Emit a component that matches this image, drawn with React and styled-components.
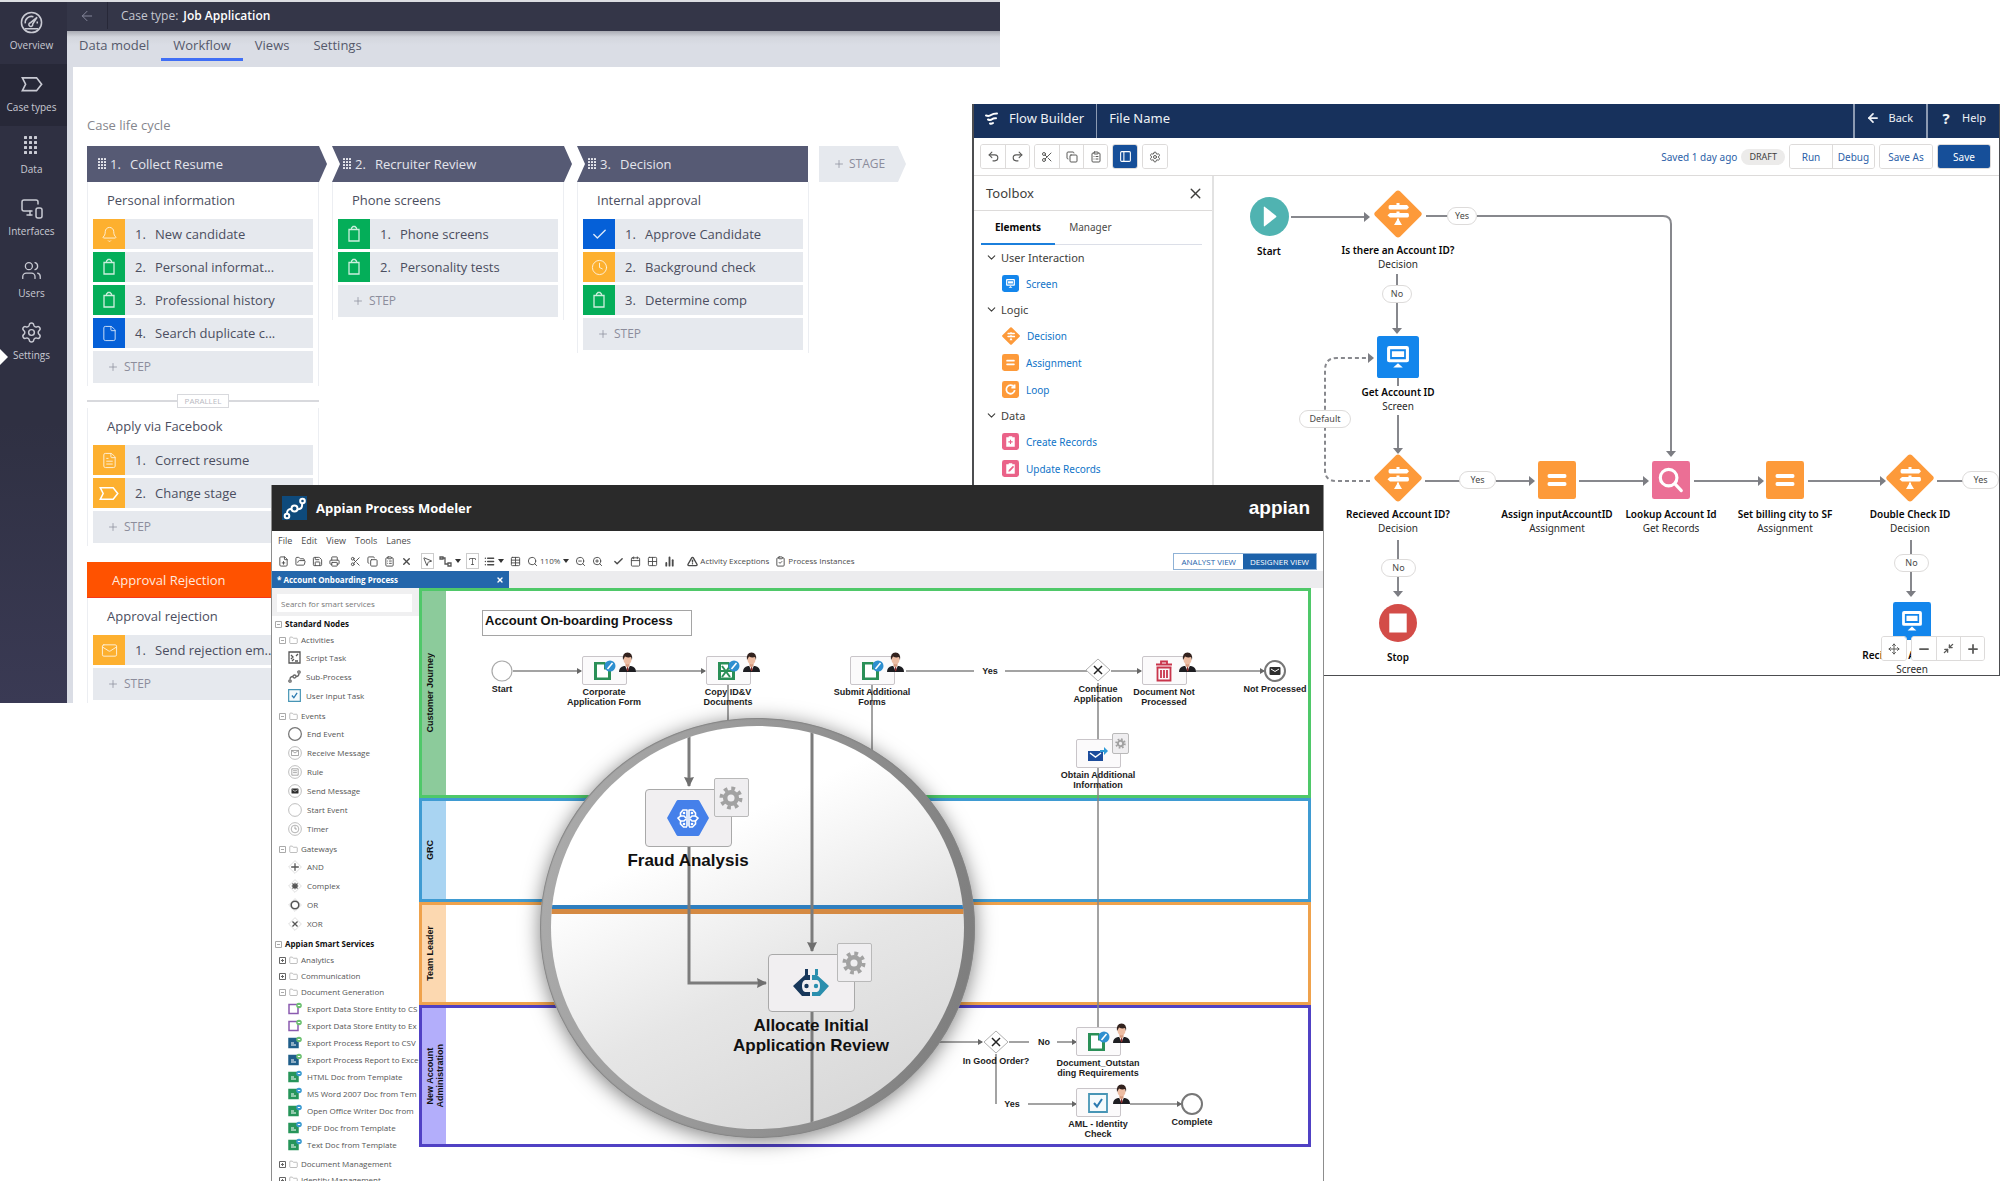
import React from 'react';
import styled, { createGlobalStyle, css } from 'styled-components';
import {
  ArrowLeft, Bell, Calendar, Check, ChevronDown, ClipboardCheck, ClipboardList, Clock, Copy, File, FileText,
  FolderOpen, Folder, Grid2x2, List, Mail, Minimize2, Minus, MonitorSmartphone, Move, MousePointer2,
  PanelLeft, Plus, Printer, Redo2, Save, Scissors, Search, Settings, Spline, Table, TriangleAlert,
  Undo2, Users, X, ZoomIn, ZoomOut, ChartNoAxesColumn, FilePlus, Type
} from 'lucide-react';

const GlobalStyle = createGlobalStyle`
  * { box-sizing: border-box; }
  body { margin: 0; background: #fff; }
  button, input { font: inherit; color: inherit; margin: 0; }
  button { padding: 0; border: 0; background: none; cursor: pointer; }
  ul, ol { list-style: none; margin: 0; padding: 0; }
  a { color: inherit; text-decoration: none; }
  h1, h2, h3, p { margin: 0; font: inherit; }
  svg { display: block; flex: none; }
`;

const Desktop = styled.main`
  position: relative;
  height: 100vh;
  overflow: hidden;
  background: #fff;
`;

/* ---------- Case designer ---------- */

const CaseWindow = styled.section`
  position: absolute;
  left: 0;
  top: 0;
  width: 50%;
  display: flex;
  border-top: 2px solid #dcdee2;
  background: #fff;
  color: #4b4e60;
  font: 13px/20px 'Open Sans', sans-serif;
`;

const SideNav = styled.nav`
  flex: none;
  width: 67px;
  padding-right: 4px;
  background: linear-gradient(#2f3042 60%, #3a3a54);
`;

const NavItem = styled.a`
  position: relative;
  display: flex;
  flex-direction: column;
  align-items: center;
  justify-content: space-between;
  height: 62px;
  margin-right: -4px;
  padding: 8px 4px 11px 0;
  background: ${p => (p.$active ? '#272838' : 'transparent')};
  color: #c9cad3;
  font-size: 10px;
  line-height: 16px;
`;

const NavIcon = styled.span`
  display: flex;
  align-items: center;
  height: 24px;
`;

const NavPointer = styled.span`
  position: absolute;
  left: 0;
  bottom: 9px;
  border: 8px solid transparent;
  border-left-color: #fff;
  border-right-width: 0;
`;

const CaseMain = styled.div`
  flex: 1;
  min-width: 0;
`;

const CaseHeader = styled.header`
  display: flex;
  align-items: center;
  height: 29px;
  padding-bottom: 2px;
  background: #343648;
  color: #c5c7d1;
  font-size: 12px;
`;

const BackButton = styled.button`
  display: flex;
  align-items: center;
  justify-content: center;
  width: 41px;
  height: 27px;
  margin-right: 13px;
  border-right: 1px solid #272838;
  color: #84869a;
`;

const CaseName = styled.b`
  margin-left: 5px;
  color: #fff;
  font-weight: 600;
`;

const CaseTabs = styled.div`
  display: flex;
  height: 36px;
  background: linear-gradient(#a9abb3, #d3d6dd 6px, #dadde5 14px);
`;

const CaseTab = styled.button`
  height: 30px;
  padding: 0 12px;
  border-bottom: 3px solid ${p => (p.$active ? '#3f6ef5' : 'transparent')};
  color: #55596b;
`;

const CaseBody = styled.div`
  padding: 48px 0 0 14px;
  border-left: 6px solid #dadde5;
`;

const LifeCycleTitle = styled.h2`
  margin-bottom: 11px;
  color: #85868d;
`;

const Stages = styled.div`
  display: grid;
  grid-template-columns: 240px 240px 231px auto;
  gap: 5px;
  justify-content: start;
  align-items: start;
`;

const shapes = {
  first: 'polygon(0 0, calc(100% - 8px) 0, 100% 50%, calc(100% - 8px) 100%, 0 100%)',
  middle: 'polygon(0 0, calc(100% - 8px) 0, 100% 50%, calc(100% - 8px) 100%, 0 100%, 8px 50%)',
  last: 'polygon(0 0, 100% 0, 100% 100%, 0 100%, 8px 50%)'
};

const StageHead = styled.h3`
  display: flex;
  align-items: center;
  gap: 3px;
  height: 36px;
  padding-left: 11px;
  background: #565a74;
  color: #e4e5ec;
  clip-path: ${p => shapes[p.$shape]};
`;

const StageNumber = styled.span`
  width: 17px;
`;

const AddStage = styled.button`
  display: flex;
  align-items: center;
  gap: 4px;
  width: 87px;
  height: 36px;
  margin-left: 6px;
  padding-left: 14px;
  background: #e6e9ee;
  color: #8c8d9c;
  font-size: 12px;
  clip-path: ${shapes.first};
`;

const Process = styled.div`
  width: 232px;
  padding: 0 5px 3px;
  border: solid #eceef2;
  border-width: 0 1px;
`;

const ProcessTitle = styled.p`
  padding: 8px 14px 9px;
`;

const Steps = styled.ol`
  display: grid;
  gap: 3px;
`;

const Step = styled.li`
  display: flex;
  align-items: center;
  height: ${p => (p.$add ? 32 : 30)}px;
  background: #e6e9ee;
`;

const StepTile = styled.span`
  display: flex;
  align-items: center;
  justify-content: center;
  width: 32px;
  height: 30px;
  margin-right: 10px;
  background: ${p => p.$color};
  color: #fff;
`;

const StepNumber = styled.span`
  width: 20px;
`;

const AddStep = styled.button`
  display: flex;
  align-items: center;
  gap: 5px;
  height: 32px;
  padding-left: 14px;
  color: #8c8d9c;
  font-size: 12px;
`;

const Parallel = styled.div`
  display: flex;
  align-items: center;
  width: 232px;
  margin-top: 8px;
  color: #b9bac2;
  font-size: 8px;
  line-height: 12px;

  &::before, &::after {
    content: '';
    flex: 1;
    height: 2px;
    background: #d8d9dd;
  }
`;

const ParallelLabel = styled.span`
  padding: 0 7px;
  border: 1px solid #d8d9dd;
`;

const Rejection = styled.h3`
  display: flex;
  align-items: center;
  height: 36px;
  margin-top: 16px;
  padding-left: 25px;
  border-bottom: 1px solid #f5371c;
  background: #ff5200;
  color: #ffe9df;
`;

const ORANGE = '#fdb02f';
const GREEN = '#04ae59';
const BLUE = '#0560d8';

const Gauge = () => (
  <svg width="23" height="23" viewBox="0 0 24 24" fill="none" stroke="currentColor" strokeWidth="1.6">
    <circle cx="12" cy="12" r="10.5" />
    <path d="M5.500 13a6.500 6.500 0 0 1 8.500-7M5 18.500h14M17.800 6.500l-4.600 7.200a2 2 0 1 1-2.200-1.500zM18 11v2" />
  </svg>
);

const CaseShape = ({ width = 22 }) => (
  <svg width={width} height={width * 3 / 4} viewBox="0 0 24 18" fill="none" stroke="currentColor" strokeWidth="1.800">
    <path d="M1.500 2H17l5.500 7-5.500 7H1.500L5 9z" />
  </svg>
);

const Dots = ({ cols, rows, size, gap }) => (
  <svg width={cols * gap} height={rows * gap} fill="currentColor">
    {Array.from({ length: cols * rows }, (_, i) => (
      <rect key={i} x={(i % cols) * gap} y={Math.floor(i / cols) * gap} width={size} height={size} rx=".5" />
    ))}
  </svg>
);

const Bag = () => (
  <svg width="14" height="18" viewBox="0 0 14 18" fill="none" stroke="currentColor" strokeWidth="1.300" opacity=".8">
    <path d="M2 4.500h10v11.500H2zM4.500 4.500V3l1.500-1.500h2L9.500 3v1.500" />
  </svg>
);

const glyph = { size: 17, strokeWidth: 1.3, opacity: 0.85 };

const stepKinds = {
  bell: [ORANGE, <Bell {...glyph} />],
  bag: [GREEN, <Bag />],
  file: [BLUE, <File {...glyph} />],
  check: [BLUE, <Check {...glyph} strokeWidth={2} />],
  clock: [ORANGE, <Clock {...glyph} />],
  text: [ORANGE, <FileText {...glyph} />],
  stage: [ORANGE, <CaseShape width={20} />],
  mail: [ORANGE, <Mail {...glyph} />]
};

const StepGroup = ({ title, steps }) => (
  <Process>
    <ProcessTitle>{title}</ProcessTitle>
    <Steps>
      {steps.map(([kind, name], i) => (
        <Step key={name}>
          <StepTile $color={stepKinds[kind][0]}>{stepKinds[kind][1]}</StepTile>
          <StepNumber>{i + 1}.</StepNumber>
          {name}
        </Step>
      ))}
      <Step $add><AddStep><Plus size={12} strokeWidth={1.5} />STEP</AddStep></Step>
    </Steps>
  </Process>
);

const Stage = ({ number, name, shape, children }) => (
  <div>
    <StageHead $shape={shape}>
      <Dots cols={3} rows={4} size={2} gap={3} />
      <StageNumber>{number}.</StageNumber>
      {name}
    </StageHead>
    {children}
  </div>
);

const navItems = [
  ['Overview', <Gauge />],
  ['Case types', <CaseShape />],
  ['Data', <Dots cols={3} rows={4} size={3} gap={5} />],
  ['Interfaces', <MonitorSmartphone size={24} strokeWidth={1.5} />],
  ['Users', <Users size={21} strokeWidth={1.5} />],
  ['Settings', <Settings size={23} strokeWidth={1.5} />]
];

const CaseDesigner = () => (
  <CaseWindow>
    <SideNav>
      {navItems.map(([name, icon]) => (
        <NavItem key={name} href="#" $active={name === 'Case types'}>
          <NavIcon>{icon}</NavIcon>
          {name}
          {name === 'Settings' && <NavPointer />}
        </NavItem>
      ))}
    </SideNav>
    <CaseMain>
      <CaseHeader>
        <BackButton aria-label="Back"><ArrowLeft size={16} strokeWidth={1.5} /></BackButton>
        Case type: <CaseName>Job Application</CaseName>
      </CaseHeader>
      <CaseTabs>
        {['Data model', 'Workflow', 'Views', 'Settings'].map(tab => (
          <CaseTab key={tab} $active={tab === 'Workflow'}>{tab}</CaseTab>
        ))}
      </CaseTabs>
      <CaseBody>
        <LifeCycleTitle>Case life cycle</LifeCycleTitle>
        <Stages>
          <Stage number={1} name="Collect Resume" shape="first">
            <StepGroup
              title="Personal information"
              steps={[['bell', 'New candidate'], ['bag', 'Personal informat...'], ['bag', 'Professional history'], ['file', 'Search duplicate c...']]}
            />
            <Parallel><ParallelLabel>PARALLEL</ParallelLabel></Parallel>
            <StepGroup title="Apply via Facebook" steps={[['text', 'Correct resume'], ['stage', 'Change stage']]} />
            <Rejection>Approval Rejection</Rejection>
            <StepGroup title="Approval rejection" steps={[['mail', 'Send rejection em...']]} />
          </Stage>
          <Stage number={2} name="Recruiter Review" shape="middle">
            <StepGroup title="Phone screens" steps={[['bag', 'Phone screens'], ['bag', 'Personality tests']]} />
          </Stage>
          <Stage number={3} name="Decision" shape="last">
            <StepGroup
              title="Internal approval"
              steps={[['check', 'Approve Candidate'], ['clock', 'Background check'], ['bag', 'Determine comp']]}
            />
          </Stage>
          <AddStage><Plus size={12} strokeWidth={1.5} />STAGE</AddStage>
        </Stages>
      </CaseBody>
    </CaseMain>
  </CaseWindow>
);

/* ---------- Flow builder ---------- */

const FlowWindow = styled.section`
  position: absolute;
  left: 48.6%;
  right: 0;
  top: 104px;
  display: flex;
  flex-direction: column;
  border: solid #4c4d50;
  border-width: 0 1px 1px 2px;
  background: #fff;
  color: #3e3e3c;
  font: 11px/14px 'Noto Sans', sans-serif;
`;

const FlowHeader = styled.header`
  display: flex;
  align-items: stretch;
  height: 34px;
  background: #17315c;
  color: #eef1f6;
  font-size: 13px;
`;

const FlowBrand = styled.h1`
  display: flex;
  align-items: center;
  gap: 11px;
  padding: 0 12px 6px 11px;
  border-right: 1px solid #8c9ab2;
`;

const FileName = styled.span`
  flex: 1;
  padding: 7px 12px;
`;

const HeaderLink = styled.a`
  display: flex;
  align-items: center;
  gap: 9px;
  padding: 0 13px 6px 11px;
  border-left: 2px solid #8c9ab2;
  font-size: 11px;
`;

const HelpMark = styled.b`
  width: 14px;
  font-size: 15px;
  text-align: center;
`;

const FlowToolbar = styled.div`
  display: flex;
  align-items: center;
  gap: 4px;
  height: 38px;
  padding: 0 8px 0 6px;
  border-bottom: 1px solid #dddbda;
  color: #2c5fa8;
`;

const ButtonGroup = styled.div`
  display: flex;
  border: 1px solid #dddbda;
  border-radius: 3px;
  background: #fff;
  overflow: hidden;
`;

const FlowButton = styled.button`
  display: flex;
  align-items: center;
  justify-content: center;
  width: ${p => p.$width || 24}px;
  height: 23px;
  background: ${p => (p.$filled ? '#164f99' : '#fff')};
  color: ${p => (p.$filled ? '#fff' : p.$width ? '#2c5fa8' : '#5a5a58')};
  font-size: 10px;

  & + & { border-left: 1px solid #dddbda; }
`;

const Saved = styled.span`
  margin-left: auto;
  font-size: 10px;
`;

const Draft = styled.span`
  padding: 1px 8px;
  border-radius: 8px;
  background: #ecebea;
  color: #3e3e3c;
  font-size: 9px;
`;

const FlowBody = styled.div`
  display: flex;
  height: 499px;
`;

const Toolbox = styled.aside`
  flex: none;
  width: 240px;
  border-right: 2px solid #e2e2e2;
`;

const ToolboxHead = styled.div`
  display: flex;
  align-items: center;
  justify-content: space-between;
  height: 35px;
  padding: 0 8px 0 12px;
  border-bottom: 1px solid #dddbda;
  font-size: 13px;
`;

const ToolTabs = styled.div`
  display: flex;
  height: 34px;
  margin: 0 10px 0 7px;
  border-bottom: 1px solid #dcdfe8;
`;

const ToolTab = styled.button`
  height: 34px;
  padding: 0 14px;
  border-bottom: 2px solid ${p => (p.$active ? '#1b7fdc' : 'transparent')};
  color: ${p => (p.$active ? '#080707' : '#4a4a48')};
  font-size: 10px;
  font-weight: ${p => (p.$active ? 700 : 400)};
`;

const ToolSection = styled.h3`
  display: flex;
  align-items: center;
  gap: 3px;
  height: 25px;
  padding-left: 11px;
`;

const ToolItem = styled.li`
  display: flex;
  align-items: center;
  gap: 7px;
  height: 27px;
  padding-left: 28px;
  color: #0f74c8;
  font-size: 10px;
`;

const FlowCanvas = styled.div`
  position: relative;
  flex: 1;
  overflow: hidden;
`;

const Wires = styled.svg`
  position: absolute;
  left: 0;
  top: 0;
  width: 100%;
  height: 100%;
  pointer-events: none;
`;

const FlowNode = styled.div`
  position: absolute;
  left: ${p => p.$x}px;
  top: ${p => p.$y}px;
  display: grid;
  justify-items: center;
  align-content: end;
  width: 140px;
  margin-left: -70px;
  color: #2b2b2b;
  font-size: 10px;
  line-height: 14px;
`;

const NodeIcon = styled.div`
  display: flex;
  align-items: center;
  justify-content: center;
  height: 48px;
  margin-bottom: ${p => p.$gap || 4}px;
`;

const NodeName = styled.b`
  font-weight: 600;
  color: #080707;
  white-space: nowrap;
`;

const Pill = styled.span`
  position: absolute;
  left: ${p => p.$x}px;
  top: ${p => p.$y}px;
  width: ${p => p.$w}px;
  height: 18px;
  border: 1px solid #dddbda;
  border-radius: 9px;
  background: #fff;
  color: #4a4a48;
  font-size: 9px;
  line-height: 16px;
  text-align: center;
`;

const ZoomBar = styled.div`
  position: absolute;
  right: 14px;
  bottom: 14px;
  display: flex;
  gap: 4px;
`;

const flowColors = {
  decision: '#fd9a3a', assign: '#fd9a3a', loop: '#fd9a3a', screen: '#1386ec', lookup: '#eb6f95',
  start: '#50b3b1', stop: '#d34c48', record: '#ea6288', update: '#ea6288'
};

const flowShapes = {
  decision: <path d="M24 .5q1.200 0 2 .8L47 22.300q1.500 1.700 0 3.400L26 46.700q-2 1.500-4 0L1 25.700q-1.500-1.700 0-3.400L22 1.300q.8-.8 2-.8z" />,
  start: <circle cx="24" cy="24" r="24" />,
  stop: <circle cx="24" cy="24" r="24" />
};

const flowGlyphs = {
  decision: (
    <path d="M22.500 13h3v2h7.500l2 2.300-2 2.300H16q-1.500 0-1.500-2.300T16 15h6.500zM22.500 21.500h3v1.500h8q1.500 0 1.500 2.300t-1.500 2.300H16l-2.500-2.300L16 23h6.500zM23 28.500h2v1.500l3 5h-8l3-5z" />
  ),
  assign: <path d="M14 16.500h20q2 0 2 2.500t-2 2.500H14q-2 0-2-2.500t2-2.500zM14 26.500h20q2 0 2 2.500t-2 2.500H14q-2 0-2-2.500t2-2.500z" />,
  screen: (
    <path fillRule="evenodd" d="M14 11.500h20q2.500 0 2.500 2.500v14q0 2-2.500 2H14q-2.500 0-2.500-2V14q0-2.500 2.500-2.500zM15 15v11.500h18V15zM17 17.500h14V24H17zM24 31l5.500 5h-11z" />
  ),
  lookup: (
    <g fill="none" stroke="#fff" strokeWidth="4" strokeLinecap="round"><circle cx="21" cy="21" r="10.500" /><path d="M29 29l8 8.500" /></g>
  ),
  start: <path d="M17 12.500q0-1 1-.5l14 11q1 1 0 2l-14 11q-1 .5-1-.5z" />,
  stop: <rect x="13" y="12" width="22" height="24" />,
  loop: <g fill="none" stroke="#fff" strokeWidth="5"><path d="M34 17a12 12 0 1 0 2 9" /><path d="M35.500 10v9h-9" /></g>,
  record: <path fillRule="evenodd" d="M12 12h7V9h10v3h7v27H12zM22.500 19v4.500H18v3h4.500V31h3v-4.500H30v-3h-4.500V19z" />,
  update: <path fillRule="evenodd" d="M12 12h7V9h10v3h7v27H12zM31 16L19 28l-1 5 5-1 11-12z" />
};

const FlowIcon = ({ kind, size }) => (
  <svg width={size} height={size} viewBox="0 0 48 48">
    <g fill={flowColors[kind]}>{flowShapes[kind] || <rect width="48" height="48" rx={size > 20 ? 3 : 7} />}</g>
    <g fill="#fff">{flowGlyphs[kind]}</g>
  </svg>
);

const FlowLogo = () => (
  <svg width="13" height="13" viewBox="0 0 13 13" fill="none" stroke="#fff" strokeWidth="2" strokeLinecap="round">
    <path d="M1 3.500q3 1 5-.5t6-1.500M3 7.500q2.500 1 4-.3t4-1M5 11.500q1.500.5 3-.5" />
  </svg>
);

const tools = [
  ['User Interaction', [['screen', 'Screen']]],
  ['Logic', [['decision', 'Decision'], ['assign', 'Assignment'], ['loop', 'Loop']]],
  ['Data', [['record', 'Create Records'], ['update', 'Update Records']]]
];

const flowNodes = [
  { kind: 'start', x: 55, y: 16, size: 39, name: 'Start' },
  { kind: 'decision', x: 184, y: 14, size: 48, name: 'Is there an Account ID?', type: 'Decision', gap: 5 },
  { kind: 'screen', x: 184, y: 157, size: 42, name: 'Get Account ID', type: 'Screen' },
  { kind: 'decision', x: 184, y: 278, size: 48, name: 'Recieved Account ID?', type: 'Decision', gap: 5 },
  { kind: 'assign', x: 343, y: 280, size: 38, name: 'Assign inputAccountID', type: 'Assignment', gap: 3 },
  { kind: 'lookup', x: 457, y: 280, size: 38, name: 'Lookup Account Id', type: 'Get Records', gap: 3 },
  { kind: 'assign', x: 571, y: 280, size: 38, name: 'Set billing city to SF', type: 'Assignment', gap: 3 },
  { kind: 'decision', x: 696, y: 278, size: 48, name: 'Double Check ID', type: 'Decision', gap: 5 },
  { kind: 'stop', x: 184, y: 423, size: 38, name: 'Stop', gap: 3 },
  { kind: 'screen', x: 698, y: 421, size: 38, name: 'Recieved Account ID', type: 'Screen', gap: 3 }
];

const pills = [
  ['Yes', 233, 31, 30], ['No', 168, 109, 30], ['Default', 85, 234, 52], ['Yes', 245, 295, 37],
  ['Yes', 748, 295, 37], ['No', 167, 383, 35], ['No', 680, 378, 35]
];

const flowWires = [
  'M77 41h74', 'M263 40h186q8 0 8 8v228', 'M183 127v26', 'M184 239v34', 'M282 305h34', 'M365 305h65',
  'M480 305h65', 'M594 305h73', 'M184 400v16', 'M697 396v20'
];

const FlowBuilder = () => (
  <FlowWindow>
    <FlowHeader>
      <FlowBrand><FlowLogo />Flow Builder</FlowBrand>
      <FileName>File Name</FileName>
      <HeaderLink href="#"><ArrowLeft size={14} strokeWidth={3} />Back</HeaderLink>
      <HeaderLink href="#"><HelpMark>?</HelpMark>Help</HeaderLink>
    </FlowHeader>
    <FlowToolbar>
      <ButtonGroup>
        <FlowButton aria-label="Undo"><Undo2 size={13} /></FlowButton>
        <FlowButton aria-label="Redo"><Redo2 size={13} /></FlowButton>
      </ButtonGroup>
      <ButtonGroup>
        <FlowButton aria-label="Cut"><Scissors size={12} /></FlowButton>
        <FlowButton aria-label="Copy"><Copy size={12} /></FlowButton>
        <FlowButton aria-label="Paste"><ClipboardList size={12} /></FlowButton>
      </ButtonGroup>
      <ButtonGroup><FlowButton $filled aria-label="Toggle toolbox"><PanelLeft size={13} /></FlowButton></ButtonGroup>
      <ButtonGroup><FlowButton aria-label="Settings"><Settings size={12} /></FlowButton></ButtonGroup>
      <Saved>Saved 1 day ago</Saved>
      <Draft>DRAFT</Draft>
      <ButtonGroup><FlowButton $width={42}>Run</FlowButton><FlowButton $width={42}>Debug</FlowButton></ButtonGroup>
      <ButtonGroup><FlowButton $width={52}>Save As</FlowButton></ButtonGroup>
      <ButtonGroup><FlowButton $width={52} $filled>Save</FlowButton></ButtonGroup>
    </FlowToolbar>
    <FlowBody>
      <Toolbox>
        <ToolboxHead>Toolbox<button aria-label="Close"><X size={17} /></button></ToolboxHead>
        <ToolTabs>
          <ToolTab $active>Elements</ToolTab>
          <ToolTab>Manager</ToolTab>
        </ToolTabs>
        {tools.map(([section, items]) => (
          <div key={section}>
            <ToolSection><ChevronDown size={13} />{section}</ToolSection>
            <ul>
              {items.map(([kind, name]) => (
                <ToolItem key={name}><FlowIcon kind={kind} size={kind === 'decision' ? 18 : 17} />{name}</ToolItem>
              ))}
            </ul>
          </div>
        ))}
      </Toolbox>
      <FlowCanvas>
        <Wires fill="none" stroke="#87888d" strokeWidth="2">
          <defs>
            <marker id="flow-arrow" markerUnits="userSpaceOnUse" markerWidth="7" markerHeight="10" refX="1" refY="5" orient="auto">
              <path d="M0 0l6 5-6 5z" fill="#7c7d83" stroke="none" />
            </marker>
          </defs>
          <path d="M183 98v14M184 202v8M184 364v20M697 364v14M212 40h25M211 305h35M723 305h26" />
          {flowWires.map(d => <path key={d} d={d} markerEnd="url(#flow-arrow)" />)}
          <path d="M156 305h-34q-11 0-11-11V194q0-12 12-12h32" strokeDasharray="4 3" markerEnd="url(#flow-arrow)" />
        </Wires>
        {flowNodes.map((n, i) => (
          <FlowNode key={i} $x={n.x} $y={n.y}>
            <NodeIcon $gap={n.gap}><FlowIcon kind={n.kind} size={n.size} /></NodeIcon>
            <NodeName>{n.name}</NodeName>
            {n.type}
          </FlowNode>
        ))}
        {pills.map(([text, x, y, w], i) => <Pill key={i} $x={x} $y={y} $w={w}>{text}</Pill>)}
        <ZoomBar>
          <ButtonGroup><FlowButton aria-label="Pan"><Move size={12} /></FlowButton></ButtonGroup>
          <ButtonGroup>
            <FlowButton aria-label="Zoom out"><Minus size={14} strokeWidth={3} /></FlowButton>
            <FlowButton aria-label="Fit"><Minimize2 size={11} strokeWidth={3} /></FlowButton>
            <FlowButton aria-label="Zoom in"><Plus size={14} strokeWidth={3} /></FlowButton>
          </ButtonGroup>
        </ZoomBar>
      </FlowCanvas>
    </FlowBody>
  </FlowWindow>
);

/* ---------- Process modeler ---------- */

const ModelerWindow = styled.section`
  position: absolute;
  left: 13.55%;
  top: 485px;
  bottom: 0;
  width: 52.65%;
  display: flex;
  flex-direction: column;
  border: solid #8d8d8d;
  border-width: 0 1px;
  background: #fff;
  color: #4a4a4a;
  font: 8px/12px 'Open Sans', sans-serif;
  overflow: hidden;
`;

const ModelerHeader = styled.header`
  flex: none;
  display: flex;
  align-items: center;
  gap: 9px;
  height: 46px;
  padding: 0 13px 0 10px;
  background: #2a2a2a;
  color: #fff;
`;

const ModelerTitle = styled.h1`
  flex: 1;
  font-size: 13px;
  font-weight: 700;
`;

const Wordmark = styled.span`
  font: bold 19px/28px 'Liberation Sans', sans-serif;
`;

const MenuBar = styled.nav`
  flex: none;
  display: flex;
  gap: 9px;
  padding: 4px 6px;
  font-size: 9px;
`;

const ModelerTools = styled.div`
  flex: none;
  display: flex;
  align-items: center;
  gap: 6px;
  height: 20px;
  padding: 0 6px;
`;

const ToolButton = styled.button`
  display: flex;
  align-items: center;
  justify-content: center;
  gap: 2px;
  min-width: 11px;
  height: 14px;
  outline: ${p => (p.$boxed ? '1px solid #ccc' : 'none')};
`;

const ToolGap = styled.span`
  width: ${p => p.$width || 0}px;
  margin-left: -2px;
`;

const Caret = styled.span`
  margin-left: 1px;
  border: 3px solid transparent;
  border-top: 4px solid #333;
  border-bottom: 0;
`;

const ViewSwitch = styled.div`
  display: flex;
  margin-left: auto;
  border: 1px solid #8fb2d6;
`;

const ViewButton = styled.button`
  height: 15px;
  padding: 0 7px;
  background: ${p => (p.$active ? '#1d62aa' : '#fff')};
  color: ${p => (p.$active ? '#fff' : '#1d62aa')};
  line-height: 15px;
`;

const DocTabs = styled.div`
  flex: none;
  height: 17px;
  background: #ececee;
`;

const DocTab = styled.div`
  display: flex;
  align-items: center;
  justify-content: space-between;
  width: 237px;
  height: 17px;
  padding: 0 5px;
  background: #2366ab;
  color: #fff;
  font-weight: 700;
`;

const ModelerBody = styled.div`
  flex: 1;
  display: flex;
  align-items: flex-start;
  min-height: 0;
`;

const Palette = styled.aside`
  flex: none;
  width: 147px;
`;

const SearchBox = styled.div`
  height: 28px;
  padding: 6px 7px 4px 5px;
  background: #f0f0f1;
`;

const SearchInput = styled.input`
  display: block;
  width: 100%;
  height: 18px;
  padding: 0 4px;
  border: 0;
  background: #fff;
  color: #4a4a4a;

  &::placeholder { color: #777; }
`;

const TreeRow = styled.div`
  display: flex;
  align-items: center;
  gap: ${p => (p.$leaf ? 5 : 3)}px;
  height: ${p => p.$height || 16}px;
  padding-left: ${p => (p.$root ? 3 : p.$leaf ? 16 : 7)}px;
  font-weight: ${p => (p.$root ? 700 : 400)};
  color: ${p => (p.$root ? '#111' : '#555')};
  white-space: nowrap;
`;

const TreeGroup = styled.div`
  padding-bottom: ${p => (p.$open ? 3 : 0)}px;
`;

const Diagram = styled.div`
  position: relative;
  flex: 1;
  margin-right: 12px;
`;

const Lane = styled.div`
  display: flex;
  height: ${p => p.$height}px;
  border: 3px solid ${p => p.$line};
`;

const LaneLabel = styled.div`
  display: flex;
  align-items: center;
  width: 24px;
  padding-left: 3px;
  background: ${p => p.$fill};
  color: #111;
  font: bold 9px/10px 'Liberation Sans', sans-serif;
  text-align: center;
  white-space: pre-line;

  span {
    writing-mode: vertical-rl;
    transform: rotate(180deg);
  }
`;

const bpmText = css`
  color: #1c1c1c;
  font: bold 9px/10px 'Liberation Sans', sans-serif;
  text-align: center;
  white-space: pre-line;
`;

const ProcessName = styled.h2`
  position: absolute;
  left: 63px;
  top: 22px;
  width: 210px;
  height: 26px;
  padding-left: 2px;
  border: 1px solid #a5a5a5;
  color: #111;
  font: bold 13px/20px 'Liberation Sans', sans-serif;
`;

const BpmNode = styled.div`
  position: absolute;
  left: ${p => p.$x}px;
  top: ${p => p.$y}px;
  display: grid;
  justify-items: center;
  gap: 2px;
  width: 100px;
  margin-left: -50px;
  ${bpmText}
`;

const TaskBox = styled.div`
  position: relative;
  display: flex;
  align-items: center;
  justify-content: center;
  width: 45px;
  height: 29px;
  border: 1px solid #c9c5c9;
  border-radius: 2px;
  background: #fbfafb;
`;

const Corner = styled.span`
  position: absolute;
  left: ${p => (p.$gear ? 35 : 36)}px;
  top: ${p => (p.$gear ? -7 : -5)}px;
`;

const GearBox = styled.span`
  display: flex;
  align-items: center;
  justify-content: center;
  width: ${p => p.$size}px;
  height: ${p => p.$size + 4}px;
  border: 1px solid #b9b9b9;
  border-radius: 2px;
  background: #efeef0;
  color: #a2a2a2;
`;

const EdgeLabel = styled.span`
  position: absolute;
  left: ${p => p.$x}px;
  top: ${p => p.$y}px;
  width: 30px;
  margin-left: -15px;
  ${bpmText}
`;

const LensRing = styled.div`
  position: absolute;
  left: 121px;
  top: 130px;
  width: 435px;
  height: 420px;
  padding: 8px 11px 9px;
  border-radius: 50%;
  background: linear-gradient(100deg, #adadad, #939393 55%, #7b7b7b);
  box-shadow: 0 3px 20px rgba(0, 0, 0, 0.5), inset 0 0 1px 1px #858585;
`;

const Lens = styled.div`
  position: relative;
  width: 100%;
  height: 100%;
  border-radius: 50%;
  overflow: hidden;
  background: linear-gradient(155deg, #fff 30%, #e6e6e6 60%, #d3d3d3);
`;

const LensDivider = styled.div`
  position: absolute;
  left: 0;
  right: 0;
  top: 179px;
  height: 9px;
  border-top: 4px solid #2f7fbf;
  border-bottom: 5px solid #d58a43;
`;

const LensNode = styled.div`
  position: absolute;
  left: ${p => p.$x}px;
  top: ${p => p.$y}px;
  display: grid;
  justify-items: center;
  gap: 4px;
  width: 200px;
  margin-left: -101px;
  color: #111;
  font: bold 17px/20px 'Liberation Sans', sans-serif;
  text-align: center;
  white-space: pre-line;
`;

const LensBox = styled.div`
  position: relative;
  display: flex;
  align-items: center;
  justify-content: center;
  width: 87px;
  height: 58px;
  border: 1px solid #a9a9a9;
  border-radius: 4px;
  background: #f1eff1;
`;

const LensCorner = styled.span`
  position: absolute;
  left: 68px;
  top: -12px;
`;

const Gear = ({ size }) => (
  <svg width={size} height={size} viewBox="0 0 24 24" fill="none" stroke="currentColor">
    <circle cx="12" cy="12" r="9.500" strokeWidth="4" strokeDasharray="3.700 3.760" />
    <circle cx="12" cy="12" r="5.800" strokeWidth="4.500" />
  </svg>
);

const Person = () => (
  <svg width="17" height="20" viewBox="0 0 17 20">
    <path d="M0 20q0-5 5-6h7q5 1 5 6z" fill="#1d1d21" />
    <path d="M6 13.500h5L8.500 19z" fill="#fff" />
    <path d="M8.100 14.500h.9l.6 3.500-1 1.500-1-1.500z" fill="#8d2a2a" />
    <path d="M6.500 10h4v4l-2 1.500-2-1.500z" fill="#d69a7e" />
    <ellipse cx="8.500" cy="7.500" rx="4" ry="5" fill="#edbda3" />
    <path d="M4 8Q3 .5 8.500.5T13 8l-1-3q-3 1-6-.5z" fill="#33231f" />
  </svg>
);

const FormIcon = ({ excel }) => (
  <svg width="24" height="22" viewBox="0 0 24 22">
    <path d="M2 2h11l6 6v12H2z" fill="#2a8f57" />
    <path d="M5 4.500h7v5h4v8H5z" fill="#fff" />
    {excel && <path d="M6 6l8 11M14 6L6 17M4 11h12" stroke="#2a8f57" strokeWidth="2" />}
    <circle cx="18" cy="6" r="5.500" fill="#2e8fd0" />
    <path d="M15.500 9l5-6" stroke="#fff" strokeWidth="1.600" />
  </svg>
);

const MessageIcon = () => (
  <svg width="20" height="18" viewBox="0 0 20 18">
    <path d="M0 6h15v10H0z" fill="#1c4c9c" />
    <path d="M2 8l5.500 4L13 8" fill="none" stroke="#fff" strokeWidth="1.500" />
    <path d="M12 5h4V2l4 4-4 4V7h-4z" fill="#2e9ad8" />
  </svg>
);

const CheckTask = ({ size = 20 }) => (
  <svg width={size} height={size} viewBox="0 0 20 20" fill="none" stroke="#4795b5">
    <path d="M1 1h18v18H1z" strokeWidth="1.800" fill="#f4fafc" />
    <path d="M6 10l3 3.500L14 6" strokeWidth="2" stroke="#2a7ab0" />
  </svg>
);

const TrashIcon = () => (
  <svg width="18" height="22" viewBox="0 0 18 22" fill="none" stroke="#c9354c" strokeWidth="1.800">
    <path d="M1 4.500h16M6 4V1.500h6V4M2.500 8v12.500h13V8M1.500 7.500h15M6 10v8M9 10v8M12 10v8" />
  </svg>
);

const GatewayIcon = () => (
  <svg width="26" height="24" viewBox="0 0 26 24" fill="#fff">
    <path d="M13 1l12 11-12 11L1 12z" stroke="#b0b0b0" />
    <path d="M9 8l8 8M17 8l-8 8" stroke="#222" strokeWidth="1.500" />
  </svg>
);

const EventIcon = ({ size = 22, message, strong, children }) => (
  <svg width={size} height={size} viewBox="0 0 22 22" fill="#fff">
    <circle cx="11" cy="11" r="10" stroke={strong ? '#777' : '#aaa'} strokeWidth={strong ? 2 : 1.2} />
    {message && <rect x="5.500" y="7" width="11" height="8" rx="1" fill="#2e2e2e" />}
    {message && <path d="M7 9l4 2.500L15 9" fill="none" stroke="#fff" />}
    {children}
  </svg>
);

const BrainHex = () => (
  <svg width="42" height="36" viewBox="0 0 42 36">
    <path d="M11 0h20q1 0 1.500 1L42 18l-9.500 17q-.5 1-1.500 1H11q-1 0-1.500-1L0 18 9.500 1Q10 0 11 0z" fill="#4580ea" />
    <g fill="none" stroke="#fff" strokeWidth="1.600">
      <path d="M20 9.500v17M22 9.500v17M20 10h-4l-2.500 3v3L11 18l2.500 3v3l3 3H20M22 10h4l2.500 3v3l2.500 2-2.500 3v3l-3 3H22" />
      <path d="M14 16h3l2 2M14 21h3l2-2M28 16h-3l-2 2M28 21h-3l-2-2" />
    </g>
    <g fill="#fff"><circle cx="17" cy="13" r="1.300" /><circle cx="25" cy="13" r="1.300" /><circle cx="17" cy="24" r="1.300" /><circle cx="25" cy="24" r="1.300" /></g>
  </svg>
);

const RobotIcon = () => (
  <svg width="36" height="28" viewBox="0 0 36 28">
    <path d="M17 6h-5L0 17l9 10h8v-4h-5q-3-1-3-6t3-6h5z" fill="#17375a" />
    <path d="M19 6h5l12 11-9 10h-8v-4h5q3-1 3-6t-3-6h-5z" fill="#2b8fae" />
    <path d="M12 0h3v6h-3z" fill="#17375a" /><path d="M22 0h3v6h-3z" fill="#2b8fae" />
    <circle cx="13.500" cy="17" r="2.200" fill="#17375a" /><circle cx="23" cy="17" r="2.200" fill="#2b8fae" />
  </svg>
);

const ModelerLogo = () => (
  <svg width="25" height="24" viewBox="0 0 25 24">
    <rect width="25" height="24" fill="#0e4a7c" />
    <g fill="none" stroke="#fff" strokeWidth="2">
      <path d="M5 17.500q0-5 5-4.500M15 13q6 1 5-6" />
      <circle cx="5" cy="20" r="2.300" /><circle cx="12.500" cy="12.500" r="3" /><circle cx="20.500" cy="5" r="2.300" />
    </g>
  </svg>
);

const SubProcessIcon = ({ size = 13 }) => (
  <svg width={size} height={size} viewBox="0 0 13 13" fill="none" stroke="#666" strokeWidth="1.300">
    <circle cx="2" cy="11" r="1.200" /><circle cx="6.500" cy="6.500" r="1.500" /><circle cx="11" cy="2" r="1.200" />
    <path d="M2 9.500q0-3 3-3M8 6.500q3 0 3-3" />
  </svg>
);

const ScriptIcon = () => (
  <svg width="13" height="13" viewBox="0 0 13 13" fill="none" stroke="#555" strokeWidth="1.300">
    <path d="M1 1h11v11H1zM3 4l2 2-2 2M10 3L8 5M7 10h3M4 10l2-2" />
  </svg>
);

const ConnectorIcon = () => (
  <svg width="13" height="11" viewBox="0 0 13 11" fill="none" stroke="#555" strokeWidth="1.300">
    <path d="M1 1h3v2H1zM4 2h2v6h3M9 7h3v3H9z" />
  </svg>
);

const Toggle = ({ open }) => (
  <svg width="7" height="7" viewBox="0 0 7 7" fill="none" stroke={open ? '#aaa' : '#666'}>
    <path d={open ? 'M.5.5h6v6h-6zM2 3.500h3' : 'M.5.5h6v6h-6zM2 3.500h3M3.500 2v3'} />
  </svg>
);

const ReportIcon = ({ fill, dot, hollow }) => (
  <svg width="14" height="13" viewBox="0 0 14 13">
    <path d="M1 2.500h9v9H1z" fill={hollow ? '#fff' : fill} stroke={fill} strokeWidth="1.500" />
    {!hollow && <path d="M3 9h5M3 7h3" stroke="#fff" />}
    <circle cx="11" cy="3.500" r="2.800" fill={dot} />
    <path d="M9.800 3.500h2.400" stroke="#fff" />
  </svg>
);

const Diamond = ({ children }) => (
  <svg width="14" height="14" viewBox="0 0 22 22" fill="none" stroke="#555" strokeWidth="2">
    <path d="M11 1l10 10-10 10L1 11z" stroke="#ccc" strokeWidth="1" />
    {children}
  </svg>
);

const purple = <ReportIcon fill="#8a5bb0" dot="#6cc070" hollow />;
const teal = <ReportIcon fill="#205f8a" dot="#6cc070" />;
const green = <ReportIcon fill="#27955a" dot="#3a9ad0" />;

const palette = [
  ['Standard Nodes', [
    ['Activities', 19, [
      ['Script Task', <ScriptIcon />],
      ['Sub-Process', <SubProcessIcon />],
      ['User Input Task', <CheckTask size={13} />]
    ]],
    ['Events', 19, [
      ['End Event', <EventIcon size={14} strong />],
      ['Receive Message', <EventIcon size={14}><path d="M5.500 7h11v8h-11zl5.500 4 5.500-4" fill="none" stroke="#777" /></EventIcon>],
      ['Rule', <EventIcon size={14}><path d="M6 6h10v10H6zM8 9h6M8 12h6" fill="none" stroke="#777" /></EventIcon>],
      ['Send Message', <EventIcon size={14} message />],
      ['Start Event', <EventIcon size={14} />],
      ['Timer', <EventIcon size={14}><circle cx="11" cy="11" r="6" stroke="#888" /><path d="M11 7v4h3" fill="none" stroke="#777" /></EventIcon>]
    ]],
    ['Gateways', 19, [
      ['AND', <Diamond><path d="M11 5v12M5 11h12" /></Diamond>],
      ['Complex', <Diamond><path d="M7 7l8 8M15 7l-8 8M11 6v10M6 11h10" /></Diamond>],
      ['OR', <Diamond><circle cx="11" cy="11" r="6" strokeWidth="2.500" /></Diamond>],
      ['XOR', <Diamond><path d="M7 7l8 8M15 7l-8 8" /></Diamond>]
    ]]
  ]],
  ['Appian Smart Services', [
    ['Analytics'],
    ['Communication'],
    ['Document Generation', 17, [
      ['Export Data Store Entity to CS', purple],
      ['Export Data Store Entity to Ex', purple],
      ['Export Process Report to CSV', teal],
      ['Export Process Report to Exce', teal],
      ['HTML Doc from Template', green],
      ['MS Word 2007 Doc from Tem', green],
      ['Open Office Writer Doc from', green],
      ['PDF Doc from Template', green],
      ['Text Doc from Template', green]
    ]],
    ['Document Management'],
    ['Identity Management']
  ]]
];

const lanes = [
  ['Customer Journey', 210, '#4fc869', '#8ccb9b'],
  ['GRC', 104, '#3f9bd2', '#a9d4f2'],
  ['Team Leader', 103, '#efa24c', '#fcd8b0'],
  ['New Account\nAdministration', 142, '#5041c4', '#b3aefb']
];

const bpmNodes = [
  { x: 83, y: 72, icon: <EventIcon />, text: 'Start' },
  { x: 185, y: 68, task: <FormIcon />, person: true, text: 'Corporate\nApplication Form' },
  { x: 309, y: 68, task: <FormIcon excel />, person: true, text: 'Copy ID&V\nDocuments' },
  { x: 453, y: 68, task: <FormIcon />, person: true, text: 'Submit Additional\nForms' },
  { x: 679, y: 70, icon: <GatewayIcon />, text: 'Continue\nApplication' },
  { x: 745, y: 68, task: <TrashIcon />, person: true, text: 'Document Not\nProcessed' },
  { x: 856, y: 72, icon: <EventIcon message strong />, text: 'Not Processed' },
  { x: 679, y: 151, task: <MessageIcon />, gear: true, text: 'Obtain Additional\nInformation' },
  { x: 577, y: 442, icon: <GatewayIcon />, text: 'In Good Order?' },
  { x: 679, y: 439, task: <FormIcon />, person: true, text: 'Document_Outstan\nding Requirements' },
  { x: 679, y: 500, task: <CheckTask />, person: true, text: 'AML - Identity\nCheck' },
  { x: 773, y: 505, icon: <EventIcon strong />, text: 'Complete' }
];

const toolIcon = { size: 11, strokeWidth: 2 };

const ProcessModeler = () => (
  <ModelerWindow>
    <ModelerHeader>
      <ModelerLogo />
      <ModelerTitle>Appian Process Modeler</ModelerTitle>
      <Wordmark>appian</Wordmark>
    </ModelerHeader>
    <MenuBar>
      {['File', 'Edit', 'View', 'Tools', 'Lanes'].map(m => <button key={m}>{m}</button>)}
    </MenuBar>
    <ModelerTools>
      <ToolButton aria-label="New"><FilePlus {...toolIcon} /></ToolButton>
      <ToolButton aria-label="Open"><FolderOpen {...toolIcon} /></ToolButton>
      <ToolButton aria-label="Save"><Save {...toolIcon} /></ToolButton>
      <ToolButton aria-label="Print"><Printer {...toolIcon} /></ToolButton>
      <ToolGap />
      <ToolButton aria-label="Cut"><Scissors {...toolIcon} /></ToolButton>
      <ToolButton aria-label="Copy"><Copy {...toolIcon} /></ToolButton>
      <ToolButton aria-label="Paste"><ClipboardList {...toolIcon} /></ToolButton>
      <ToolButton aria-label="Delete"><X {...toolIcon} strokeWidth={3} /></ToolButton>
      <ToolGap />
      <ToolButton $boxed aria-label="Select"><MousePointer2 {...toolIcon} /></ToolButton>
      <ToolButton aria-label="Connect"><ConnectorIcon /><Caret /></ToolButton>
      <ToolButton $boxed aria-label="Annotate"><Type size={9} /></ToolButton>
      <ToolButton aria-label="Layout"><List {...toolIcon} strokeWidth={3} /><Caret /></ToolButton>
      <ToolButton aria-label="Table"><Table {...toolIcon} /></ToolButton>
      <ToolButton><Search {...toolIcon} />110%<Caret /></ToolButton>
      <ToolButton aria-label="Zoom out"><ZoomOut {...toolIcon} /></ToolButton>
      <ToolButton aria-label="Zoom in"><ZoomIn {...toolIcon} /></ToolButton>
      <ToolGap />
      <ToolButton aria-label="Validate"><Check {...toolIcon} strokeWidth={3} /></ToolButton>
      <ToolButton aria-label="Schedule"><Calendar {...toolIcon} /></ToolButton>
      <ToolButton aria-label="Grid"><Grid2x2 {...toolIcon} /></ToolButton>
      <ToolButton aria-label="Chart"><ChartNoAxesColumn {...toolIcon} strokeWidth={4} /></ToolButton>
      <ToolGap $width={2} />
      <ToolButton><TriangleAlert {...toolIcon} strokeWidth={3} />Activity Exceptions</ToolButton>
      <ToolButton><ClipboardCheck {...toolIcon} />Process Instances</ToolButton>
      <ViewSwitch>
        <ViewButton>ANALYST VIEW</ViewButton>
        <ViewButton $active>DESIGNER VIEW</ViewButton>
      </ViewSwitch>
    </ModelerTools>
    <DocTabs>
      <DocTab>* Account Onboarding Process<X size={8} strokeWidth={4} /></DocTab>
    </DocTabs>
    <ModelerBody>
      <Palette>
        <SearchBox><SearchInput aria-label="Search for smart services" placeholder="Search for smart services" /></SearchBox>
        {palette.map(([root, folders]) => (
          <div key={root}>
            <TreeRow $root><Toggle open />{root}</TreeRow>
            {folders.map(([folder, height, leaves]) => (
              <TreeGroup key={folder} $open={!!leaves}>
                <TreeRow><Toggle open={!!leaves} /><Folder size={9} color="#aaa" />{folder}</TreeRow>
                {leaves && leaves.map(([leaf, icon]) => (
                  <TreeRow key={leaf} $leaf $height={height}>{icon}{leaf}</TreeRow>
                ))}
              </TreeGroup>
            ))}
          </div>
        ))}
      </Palette>
      <Diagram>
        {lanes.map(([name, height, line, fill]) => (
          <Lane key={name} $height={height} $line={line}>
            <LaneLabel $fill={fill}><span>{name}</span></LaneLabel>
          </Lane>
        ))}
        <ProcessName>Account On-boarding Process</ProcessName>
        <Wires fill="none" stroke="#858585" strokeWidth="1.500">
          <defs>
            <marker id="bpm-arrow" markerUnits="userSpaceOnUse" markerWidth="5" markerHeight="6" refX="4" refY="3" orient="auto">
              <path d="M0 0l5 3-5 3z" fill="#666" stroke="none" />
            </marker>
          </defs>
          <path d="M309 97V132M453 97V165M487 83H555M586 83H668M679 95V151M679 180V439M590 454H610M577 466V516" />
          {['M94 83H162', 'M217 83H286', 'M692 83H722', 'M777 83H845', 'M520 454H563', 'M638 454H657', 'M609 516H657', 'M711 516H762'].map(d => (
            <path key={d} d={d} markerEnd="url(#bpm-arrow)" />
          ))}
        </Wires>
        {bpmNodes.map(n => (
          <BpmNode key={n.text} $x={n.x} $y={n.y}>
            {n.icon || (
              <TaskBox>
                {n.task}
                {n.person && <Corner><Person /></Corner>}
                {n.gear && <Corner $gear><GearBox $size={17}><Gear size={11} /></GearBox></Corner>}
              </TaskBox>
            )}
            {n.text}
          </BpmNode>
        ))}
        <EdgeLabel $x={571} $y={78}>Yes</EdgeLabel>
        <EdgeLabel $x={625} $y={449}>No</EdgeLabel>
        <EdgeLabel $x={593} $y={511}>Yes</EdgeLabel>
        <LensRing>
          <Lens>
            <LensDivider />
            <Wires fill="none" stroke="#7c7c7c" strokeWidth="3">
              <defs>
                <marker id="lens-arrow" markerUnits="userSpaceOnUse" markerWidth="12" markerHeight="12" refX="9" refY="5" orient="auto">
                  <path d="M0 0l10 5-10 5 1-5z" fill="#6f6f6f" stroke="none" />
                </marker>
              </defs>
              <path d="M138 0V60" markerEnd="url(#lens-arrow)" />
              <path d="M138 120V257H215" markerEnd="url(#lens-arrow)" />
              <path d="M261 0V225" markerEnd="url(#lens-arrow)" />
              <path d="M261 285V403" />
            </Wires>
            <LensNode $x={138} $y={63}>
              <LensBox><BrainHex /><LensCorner><GearBox $size={35}><Gear size={24} /></GearBox></LensCorner></LensBox>
              Fraud Analysis
            </LensNode>
            <LensNode $x={261} $y={228}>
              <LensBox><RobotIcon /><LensCorner><GearBox $size={35}><Gear size={24} /></GearBox></LensCorner></LensBox>
              {'Allocate Initial\nApplication Review'}
            </LensNode>
          </Lens>
        </LensRing>
      </Diagram>
    </ModelerBody>
  </ModelerWindow>
);

const App = () => (
  <Desktop>
    <GlobalStyle />
    <CaseDesigner />
    <FlowBuilder />
    <ProcessModeler />
  </Desktop>
);

export default App;
